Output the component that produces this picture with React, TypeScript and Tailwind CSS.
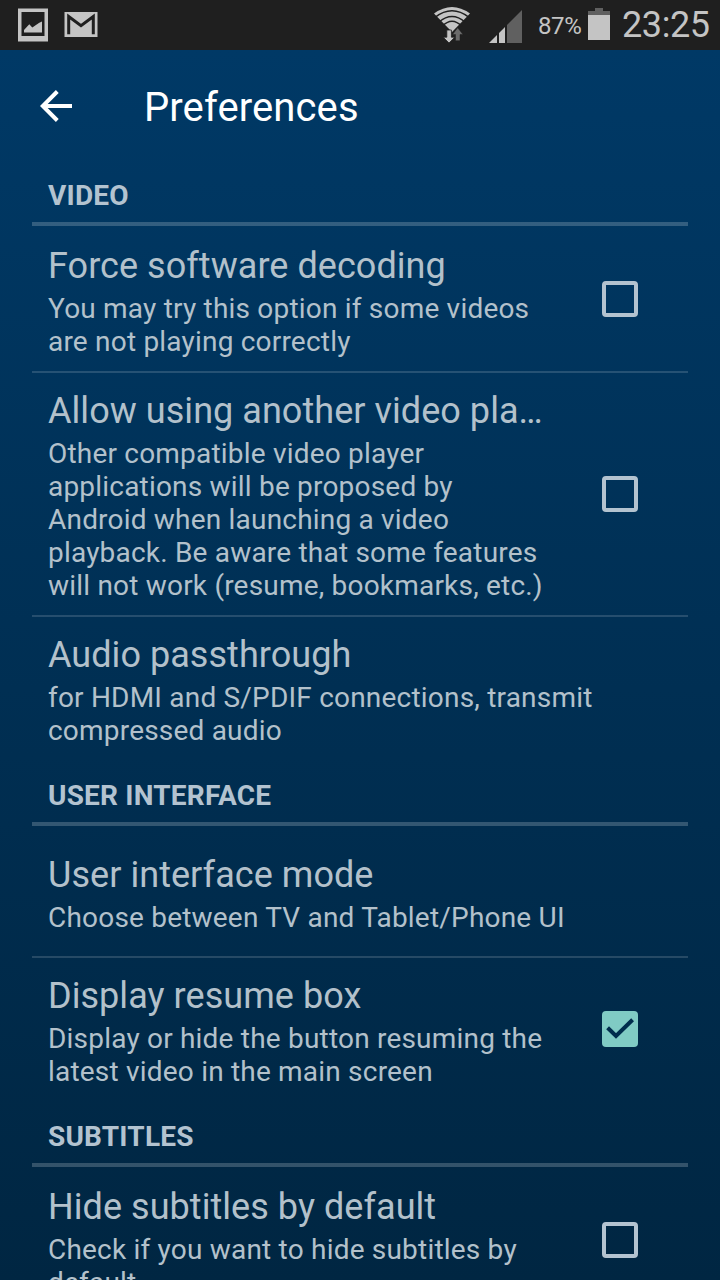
import React from "react";

import clsx from "clsx";

interface Preference {
  title: string;
  summary: string;
  checked?: boolean;
}

interface Category {
  name: string;
  items: Preference[];
}

const CATEGORIES: Category[] = [
  {
    name: "VIDEO",
    items: [
      {
        title: "Force software decoding",
        summary:
          "You may try this option if some videos\nare not playing correctly",
        checked: false
      },
      {
        title: "Allow using another video pla…",
        summary:
          "Other compatible video player\napplications will be proposed by\nAndroid when launching a video\nplayback. Be aware that some features\nwill not work (resume, bookmarks, etc.)",
        checked: false
      },
      {
        title: "Audio passthrough",
        summary:
          "for HDMI and S/PDIF connections, transmit\ncompressed audio"
      }
    ]
  },
  {
    name: "USER INTERFACE",
    items: [
      {
        title: "User interface mode",
        summary: "Choose between TV and Tablet/Phone UI"
      },
      {
        title: "Display resume box",
        summary:
          "Display or hide the button resuming the\nlatest video in the main screen",
        checked: true
      }
    ]
  },
  {
    name: "SUBTITLES",
    items: [
      {
        title: "Hide subtitles by default",
        summary: "Check if you want to hide subtitles by\ndefault",
        checked: false
      }
    ]
  }
];

const StatusBar: React.FC = () => (
  <div className="flex h-[50px] shrink-0 items-start bg-[#1f1f1f] text-[#c4c4c4]">
    <svg className="mt-2 ml-[18px]" width="30" height="34" viewBox="0 0 30 34">
      <path fill="currentColor" d="M0 .5h30v33H0z" />
      <path fill="#1f1f1f" d="M3.5 4h23v24h-23z" />
      <path
        fill="currentColor"
        d="M6 24.5V22l5.3-5.7 3 3.2 7-4.8 2.7-1.2v11z"
      />
    </svg>
    <svg className="mt-3 ml-4" width="34" height="25" viewBox="0 0 34 25">
      <path fill="currentColor" d="M.5 0h33v25H.5z" />
      <path
        fill="none"
        stroke="#1f1f1f"
        strokeWidth="3"
        d="M4.7 22.3V4.5L17 13.6 29.3 4.5v17.8"
      />
    </svg>

    <svg
      className="mt-1.5 ml-auto"
      width="36"
      height="37"
      viewBox="0 0 36 37"
    >
      <path fill="currentColor" d="M0 7.5Q18-5.5 36 7.5L18 26z" />
      <g fill="none" stroke="#1f1f1f" strokeWidth="1.4">
        <path d="M1 11.4Q18-1.8 35 11.4" />
        <path d="M5 16Q18 4.8 31 16" />
        <path d="M8 20.6Q18 10 28 20.6" />
      </g>
      <path
        fill="currentColor"
        stroke="#1f1f1f"
        strokeWidth=".8"
        d="M12.8 24h4.6v7.2h3.4L15 37l-5.8-5.8h3.6z"
      />
      <path
        fill="#6b6b6b"
        stroke="#1f1f1f"
        strokeWidth=".5"
        d="M21.5 34.8V28.5h-3l5.2-6.8 5.3 6.8h-3v6.3z"
      />
    </svg>
    <svg
      className="mt-2.5 ml-[19px]"
      width="34"
      height="33"
      viewBox="0 0 34 33"
    >
      <path fill="currentColor" d="M0 33l8-8v8zM10 33V23l6-6v16z" />
      <path fill="#606060" d="M18 33V15L33 0v33z" />
    </svg>
    <span className="mt-[11px] ml-[15px] w-[44px] text-[24px] leading-[30px] tracking-[-0.4px]">
      87%
    </span>
    <svg className="mt-2 ml-1.5" width="22" height="32" viewBox="0 0 22 32">
      <path fill="#606060" d="M7 0h8v3h7v4H0V3h7z" />
      <path fill="currentColor" d="M0 7h22v25H0z" />
    </svg>
    <span className="mt-1 ml-3 w-[98px] text-[36px] leading-[42px] tracking-[-0.4px]">
      23:25
    </span>
  </div>
);

const CheckBox: React.FC<{ checked: boolean }> = ({ checked }) => (
  <div
    className={clsx(
      "mt-px mr-[50px] size-9 shrink-0 rounded-[4px]",
      checked ? "bg-[#80cbc4]" : "border-4 border-[#b3c3d0]"
    )}
  >
    {checked && (
      <svg width="36" height="36" viewBox="0 0 36 36">
        <path
          fill="none"
          stroke="#002d4d"
          strokeWidth="4"
          d="M5.6 16.8l8.4 8.2L30.6 8.8"
        />
      </svg>
    )}
  </div>
);

const PreferenceRow: React.FC<{ item: Preference; isFirst: boolean }> = ({
  item,
  isFirst
}) => (
  <div className="relative flex min-h-[130px] items-center justify-between pl-4">
    {!isFirst && (
      <div className="absolute inset-x-0 top-0 h-0.5 bg-white/15" />
    )}
    <div
      className={clsx(
        "pt-[17px] pb-[13px] text-[#b3c1cb]",
        item.checked === undefined ? "w-[600px]" : "w-[500px]"
      )}
    >
      <div className="mb-0.5 text-[36px] leading-[47px] tracking-[0.05px] whitespace-nowrap">
        {item.title}
      </div>
      <div className="text-[28px] leading-[33px] tracking-[0.2px] whitespace-pre">
        {item.summary}
      </div>
    </div>
    {item.checked !== undefined && <CheckBox checked={item.checked} />}
  </div>
);

export default function App() {
  return (
    <div className="flex h-[1280px] w-[720px] flex-col overflow-hidden bg-[#002642] font-['Roboto',sans-serif]">
      <StatusBar />
      <div className="min-h-0 flex-1 overflow-hidden bg-linear-to-b from-[#003966] to-[#002642]">
        <header className="flex h-[110px] items-center pt-0.5 pl-10">
          <svg width="32" height="32" viewBox="0 0 32 32">
            <path
              fill="none"
              stroke="white"
              strokeWidth="4"
              d="M32 16H3M17.3 1.5L2.8 16l14.5 14.5"
            />
          </svg>
          <h1 className="mt-1 ml-[72px] text-[40px] leading-[48px] tracking-[0.1px] text-white">
            Preferences
          </h1>
        </header>

        <main className="px-8">
          {CATEGORIES.map(({ name, items }) => (
            <section key={name}>
              <h2 className="flex h-[66px] items-center border-b-4 border-white/20 pt-2 pl-4 text-[28px] leading-[33px] font-bold tracking-[0.2px] text-[#b3c3d0]">
                {name}
              </h2>
              {items.map((item, index) => (
                <PreferenceRow
                  key={item.title}
                  item={item}
                  isFirst={index === 0}
                />
              ))}
            </section>
          ))}
        </main>
      </div>
    </div>
  );
}
